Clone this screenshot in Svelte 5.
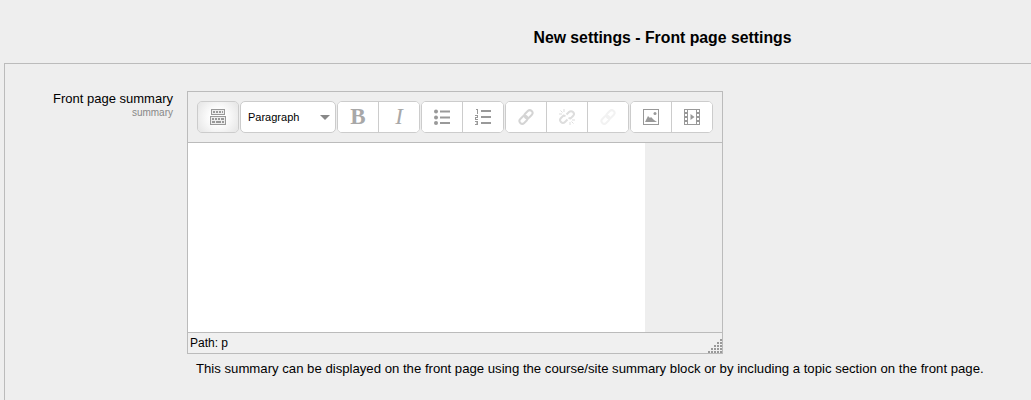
<script>
  const helpText =
    'This summary can be displayed on the front page using the course/site summary block or by including a topic section on the front page.';
</script>

<div class="page">
  <h2>New settings - Front page settings</h2>

  <section class="settings">
    <div class="row">
      <div class="label">
        <div class="label__title">Front page summary</div>
        <div class="label__name">summary</div>
      </div>

      <div class="field">
        <div class="editor">
          <div class="toolbar">
            <div class="group">
              <button class="btn btn--on" aria-label="Toolbar toggle">
                <svg width="16" height="16" viewBox="0 0 16 16">
                  <path fill="#999" d="M1 0h14v6H1zM0 7h16v9H0z" />
                  <path fill="#eee" d="M2 1h12v4H2zM1 8h14v7H1z" />
                  <path fill="#999" d="M3 2h2v2H3zM6 2h2v2H6zM9 2h2v2H9zM12 2h1v2h-1zM2 9h2v2H2zM5 9h2v2H5zM8 9h2v2H8zM11 9h3v2h-3zM2 12h3v2H2zM6 12h5v2H6zM12 12h2v2h-2z" />
                </svg>
              </button>
            </div>

            <div class="select">
              <span>Paragraph</span>
              <i class="caret"></i>
            </div>

            <div class="group">
              <button class="btn glyph glyph--b">B</button>
              <button class="btn glyph glyph--i">I</button>
            </div>

            <div class="group">
              <button class="btn" aria-label="Bullet list">
                <svg width="16" height="16" viewBox="0 0 16 16" fill="#999">
                  <circle cx="2" cy="2.5" r="2" /><circle cx="2" cy="8.5" r="2" /><circle cx="2" cy="14" r="2" />
                  <path d="M6 1.5h10v2H6zM6 7.5h10v2H6zM6 13h10v2H6z" />
                </svg>
              </button>
              <button class="btn" aria-label="Numbered list">
                <svg width="16" height="16" viewBox="0 0 16 16" fill="#999">
                  <path d="M1 0h2v5H2V1H1zM0 6h3v3H1v1h2v1H0V8h2V7H0zM0 12h3v4H0v-1h2v-.5H1v-1h1V13H0zM6 1h10v2H6zM6 7h10v2H6zM6 13h10v2H6z" />
                </svg>
              </button>
            </div>

            <div class="group">
              <button class="btn" aria-label="Link">
                <svg width="16" height="16" viewBox="0 0 16 16" fill="none" stroke="#d4d4d4" stroke-width="2">
                  <rect x="6" y="2.500" width="9" height="5.500" rx="2.750" transform="rotate(-45 10.500 5.250)" />
                  <rect x="1" y="8" width="9" height="5.500" rx="2.750" transform="rotate(-45 5.500 10.750)" />
                </svg>
              </button>
              <button class="btn" aria-label="Unlink">
                <svg width="16" height="16" viewBox="0 0 16 16" fill="none" stroke="#ddd" stroke-width="2">
                  <path d="M7.500 5.500L10 3a2.800 2.800 0 0 1 4 4l-2.500 2.500-2-.5M8.500 10.500L6 13a2.800 2.800 0 0 1-4-4l2.500-2.500 2 .5" />
                  <path stroke-width="1" d="M5 0v3M0 5h3M1.500 1.500l2 2M11 13v3M13 11h3M12.500 12.500l2 2" />
                </svg>
              </button>
              <button class="btn" aria-label="Anchor">
                <svg width="16" height="16" viewBox="0 0 16 16" fill="none" stroke="#f2f2f2" stroke-width="2">
                  <rect x="6" y="2.500" width="9" height="5.500" rx="2.750" transform="rotate(-45 10.500 5.250)" />
                  <rect x="1" y="8" width="9" height="5.500" rx="2.750" transform="rotate(-45 5.500 10.750)" />
                </svg>
              </button>
            </div>

            <div class="group">
              <button class="btn" aria-label="Image">
                <svg width="16" height="16" viewBox="0 0 16 16">
                  <path fill="#999" d="M0 0h16v16H0z" />
                  <path fill="#fff" d="M1 1h14v14H1z" />
                  <path fill="#999" d="M2 13l3-6 2 2 1-1 3 3 3 2H2z" />
                  <circle fill="#999" cx="12" cy="4.500" r="1.500" />
                </svg>
              </button>
              <button class="btn" aria-label="Media">
                <svg width="16" height="16" viewBox="0 0 16 16">
                  <path fill="#999" d="M0 0h16v16H0z" />
                  <path fill="#fff" d="M4 1h8v14H4zM1 1h2v2H1zM13 1h2v2h-2zM1 5h2v2H1zM13 5h2v2h-2zM1 9h2v2H1zM13 9h2v2h-2zM1 13h2v2H1zM13 13h2v2h-2z" />
                  <path fill="#999" d="M6.500 5l4 3-4 3z" />
                </svg>
              </button>
            </div>
          </div>

          <div class="content">
            <div class="content__text"></div>
          </div>

          <div class="status">
            <span>Path: p</span>
            <svg class="grip" width="14" height="14" viewBox="0 0 14 14" fill="#999">
              <path d="M12 0h2v2h-2zM9 3h2v2H9zM12 3h2v2h-2zM6 6h2v2H6zM9 6h2v2H9zM12 6h2v2h-2zM3 9h2v2H3zM6 9h2v2H6zM9 9h2v2H9zM12 9h2v2h-2zM0 12h2v2H0zM3 12h2v2H3zM6 12h2v2H6zM9 12h2v2H9zM12 12h2v2h-2z" />
            </svg>
          </div>
        </div>

        <p class="help">{helpText}</p>
      </div>
    </div>
  </section>
</div>

<style>
  :global(body) {
    background: #eee;
    font-family: "Liberation Sans", Arial, sans-serif;
    overflow: hidden;
  }

  .page {
    height: 400px;
    overflow: hidden;
  }

  h2 {
    margin: 0;
    height: 63px;
    box-sizing: border-box;
    padding: 29px 0 0 294px;
    text-align: center;
    font-size: 15.8px;
    line-height: 18px;
    font-weight: bold;
    color: #000;
  }

  .settings {
    margin-left: 4px;
    border-top: 1px solid #bbb;
    border-left: 1px solid #bbb;
    height: 336px;
    padding-top: 27px;
  }

  .row {
    display: flex;
  }

  .label {
    width: 168px;
    text-align: right;
  }

  .label__title {
    font-size: 13px;
    line-height: 16px;
    color: #000;
  }

  .label__name {
    font-size: 10px;
    line-height: 12px;
    color: #888;
  }

  .field {
    margin-left: 14px;
  }

  .editor {
    width: 534px;
    border: 1px solid #bbb;
    background: #eee;
  }

  .toolbar {
    height: 51px;
    box-sizing: border-box;
    padding: 9px 0 0 9px;
    display: flex;
    gap: 1px;
    border-bottom: 1px solid #bbb;
  }

  .group {
    display: flex;
    height: 32px;
    box-sizing: border-box;
    border: 1px solid #ccc;
    border-radius: 5px;
    background: #fff;
    overflow: hidden;
  }

  .btn {
    width: 41px;
    height: 30px;
    padding: 0;
    border: 0;
    border-left: 1px solid #ccc;
    background: #fff;
    display: flex;
    align-items: center;
    justify-content: center;
  }

  .btn:first-child {
    width: 40px;
    border-left: 0;
  }

  .btn--on {
    background: radial-gradient(circle, #fff 30%, #e4e4e4 100%);
  }

  .glyph {
    font-family: "Liberation Serif", "Times New Roman", serif;
    font-size: 23px;
    color: #a8a8a8;
  }

  .glyph--b {
    font-weight: bold;
  }

  .glyph--i {
    font-style: italic;
  }

  .select {
    width: 96px;
    height: 32px;
    box-sizing: border-box;
    border: 1px solid #ccc;
    border-radius: 5px;
    background: #fff;
    padding: 0 4px 0 7px;
    display: flex;
    align-items: center;
    justify-content: space-between;
    font-size: 11px;
    color: #000;
  }

  .caret {
    border-left: 5px solid transparent;
    border-right: 5px solid transparent;
    border-top: 5px solid #888;
    margin-right: 1px;
  }

  .content {
    height: 189px;
    border-bottom: 1px solid #bbb;
    background: #eee;
  }

  .content__text {
    width: 457px;
    height: 100%;
    background: #fff;
  }

  .status {
    height: 20px;
    position: relative;
    background: #f0f0f0;
    padding-left: 2px;
    font-size: 12px;
    line-height: 20px;
    color: #000;
  }

  .grip {
    position: absolute;
    right: 0;
    bottom: 0;
  }

  .help {
    margin: 7px 0 0 9px;
    font-size: 13.17px;
    line-height: 15px;
    color: #000;
    white-space: nowrap;
  }
</style>
